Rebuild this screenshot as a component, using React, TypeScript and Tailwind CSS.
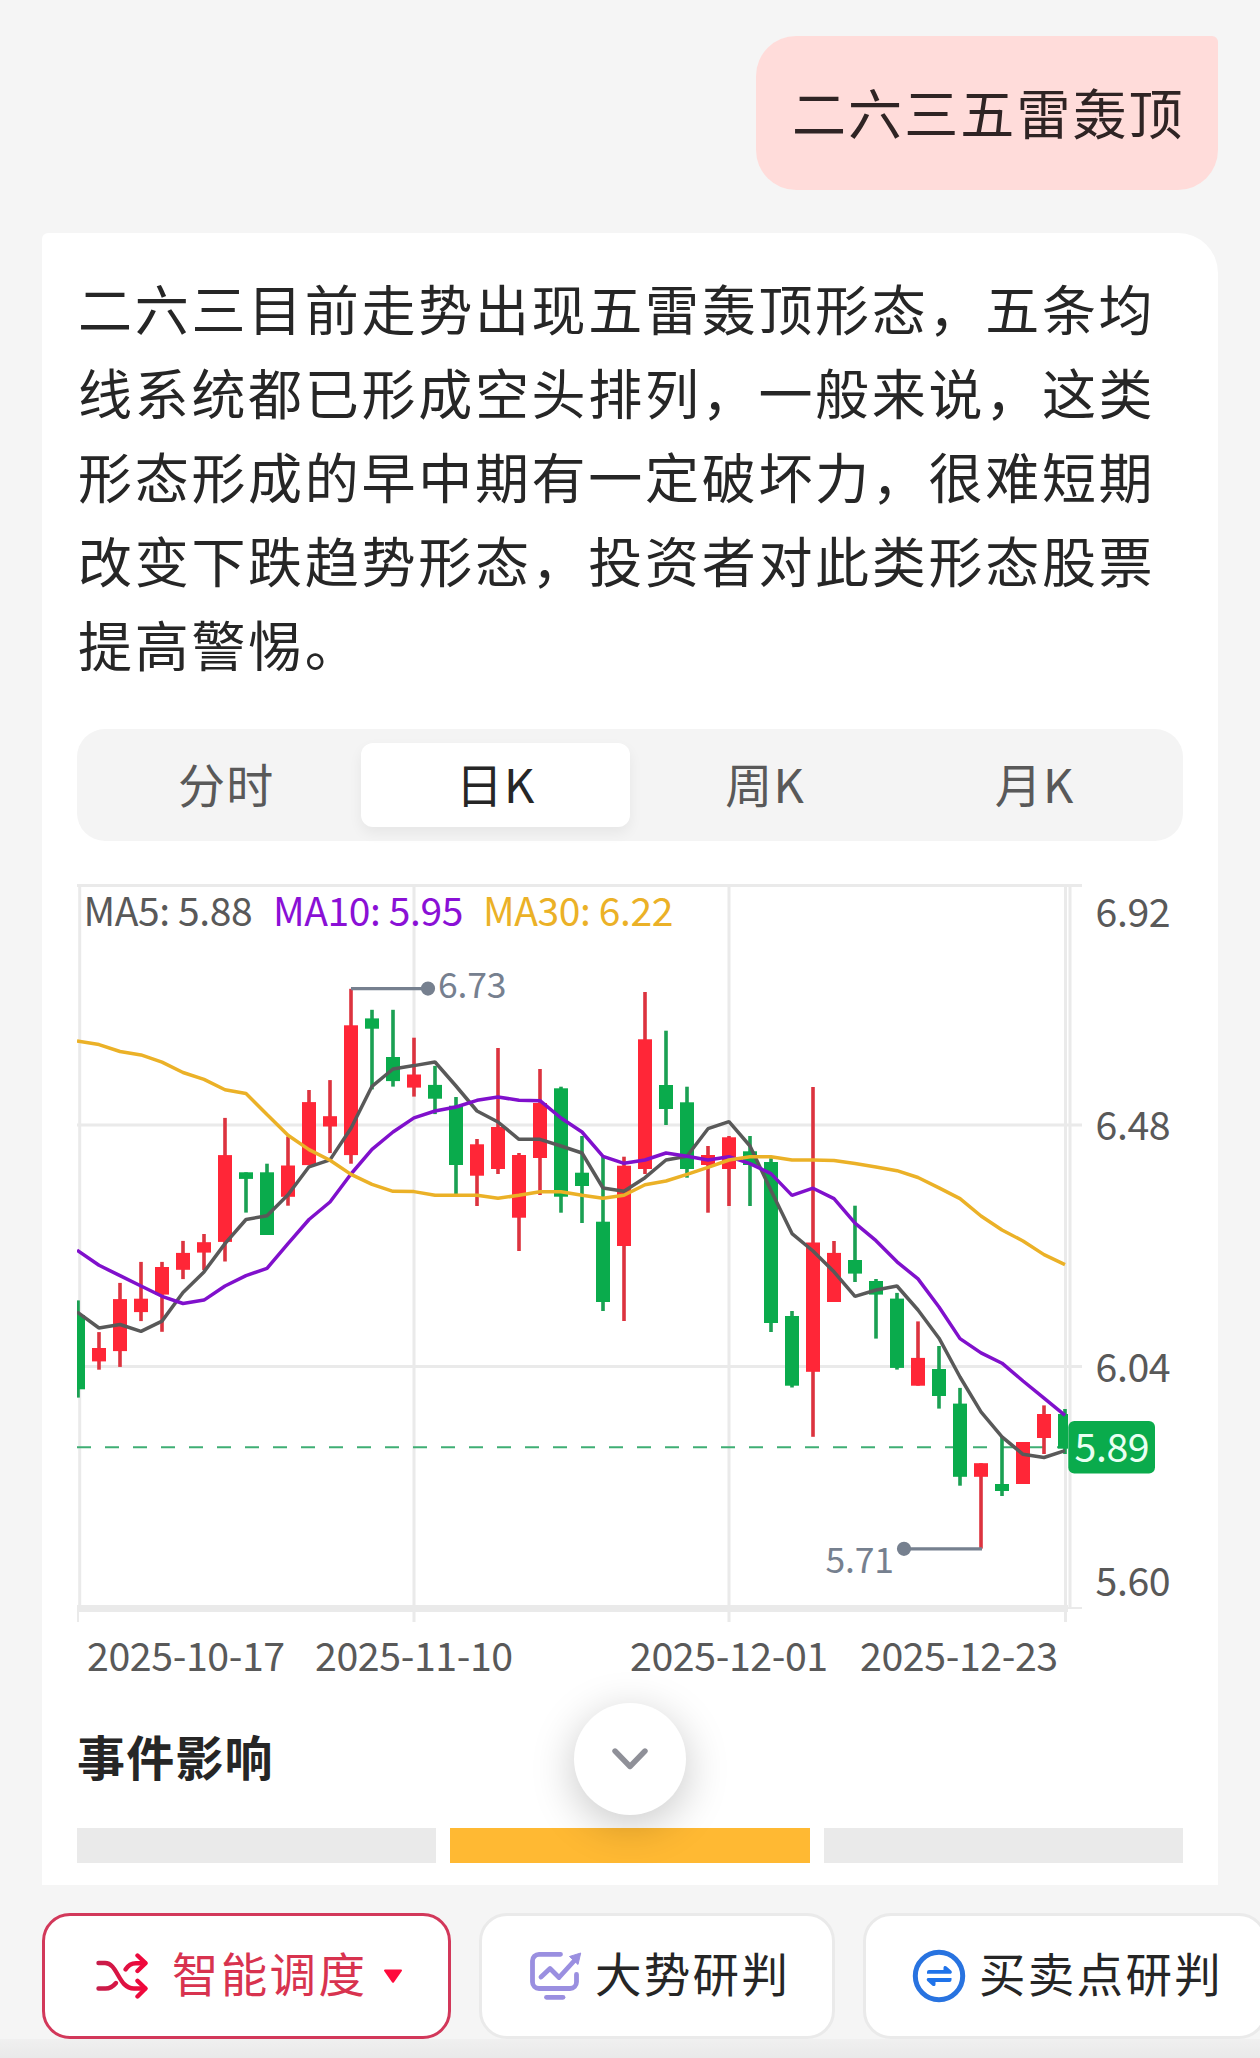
import { ReactNode, useState } from "react";
import clsx from "clsx";

type Candle = {
  high: number;
  top: number;
  bottom: number;
  low: number;
  up: boolean;
};

const UP = "#ff2637";
const DOWN = "#0aab4c";
const STEP = 21;

// [high, body top, body bottom, low, up] in plot units
const RAW: [number, number, number, number, 0 | 1][] = [
  [420.4, 435.3, 509.3, 517.6, 0],
  [452.1, 468, 481.4, 489.7, 1],
  [402.9, 419.1, 471.1, 486.9, 1],
  [381.9, 418.7, 432.1, 441.1, 1],
  [381.9, 387, 414.6, 451.8, 1],
  [360.9, 372.9, 389.8, 399.1, 1],
  [354, 362.2, 372.6, 390.1, 1],
  [237.9, 275.1, 361.9, 381.5, 1],
  [292.3, 292.3, 298.9, 332.6, 0],
  [283.7, 292.3, 355, 355, 0],
  [256.5, 285.5, 316.8, 325.7, 1],
  [210, 222.1, 285.1, 285.1, 1],
  [200.1, 236.2, 246.5, 273.1, 1],
  [108.8, 145.3, 275.1, 283.7, 1],
  [129.8, 138.4, 148.7, 209.4, 0],
  [129.8, 177, 201.1, 206.6, 0],
  [157.7, 194.5, 207.6, 216.6, 1],
  [185.9, 204.9, 218.7, 234.1, 0],
  [217, 225.7, 285, 314.3, 0],
  [259, 264.3, 295.7, 326, 1],
  [168, 247, 289, 294, 1],
  [273, 275, 337.7, 371, 1],
  [189, 223, 278, 315, 1],
  [206.7, 208.3, 316.7, 332.7, 0],
  [256, 292.7, 306, 343, 0],
  [276.7, 341.7, 422, 431, 0],
  [276.7, 285.7, 366, 441, 1],
  [112, 159.3, 289, 294, 1],
  [150.7, 205, 229, 245, 0],
  [206.7, 222.3, 289, 297.7, 0],
  [266, 275, 285, 332.7, 1],
  [256, 257.3, 289, 326, 1],
  [256, 271.3, 285, 326, 0],
  [278.3, 282, 443, 452, 0],
  [431, 436, 505.7, 507.5, 0],
  [207, 362.5, 491.8, 556.8, 1],
  [361, 372.9, 422, 422, 1],
  [325.7, 380, 393.6, 402, 0],
  [399, 401, 414.6, 458.6, 0],
  [412.9, 418.6, 487.9, 489.6, 0],
  [441.4, 477.9, 505.7, 505.7, 1],
  [466, 489, 516, 528.6, 0],
  [507.9, 523.6, 596.8, 605.7, 0],
  [583.2, 583.2, 596.8, 668.6, 1],
  [556.8, 604, 611, 616, 0],
  [562, 562, 604, 604, 1],
  [525.4, 534, 558, 574, 1],
  [529, 534, 568.6, 574, 0],
];

const CANDLES: Candle[] = RAW.map(([high, top, bottom, low, up]) => ({
  high,
  top,
  bottom,
  low,
  up: up === 1,
}));

const MA5 = [
  431.8, 448, 444.5, 451.4, 441.1, 412.5, 391.9, 363.6, 339.5, 335.7, 314.7, 286.8,
  279.9, 248.3, 206.3, 189, 185.6, 182, 206, 231, 242, 259.3, 259.3, 266, 273, 308,
  311.3, 297.7, 280, 276.3, 248.7, 241.7, 266, 310.4, 353.6, 371, 391.8, 416.4, 410,
  406, 430, 458.2, 497, 531.8, 556.8, 574.3, 577.5, 570.7,
];

const MA10 = [
  370.2, 385.3, 395.6, 406, 416.3, 423.5, 420.1, 406, 395.6, 388.4, 363.6, 339.5,
  322, 294, 269.3, 252, 237.9, 231, 227, 220.3, 217, 220.3, 220.7, 238, 252, 276.3,
  283.3, 280, 273, 276.3, 280, 276.7, 283.6, 293.6, 315.4, 308.2, 318.6, 343.2,
  360.7, 381.8, 398.9, 427, 458.6, 472.9, 483.2, 501, 518.2, 535.4,
];

const MA30 = [
  161.1, 164.6, 171.5, 174.9, 182.1, 192.5, 199.4, 209.7, 213.5, 234.5, 255.2, 269.6,
  280.3, 294.4, 304.4, 311.3, 311.6, 315.2, 315.3, 315.3, 318.3, 315.3, 311.7, 311.7,
  315.3, 318.3, 315.3, 304.7, 301, 294.3, 287.3, 280, 276.7, 276.8, 280, 280, 280.4,
  283.6, 287, 290.7, 297.5, 307.9, 318.6, 336, 350, 361, 374.6, 384.6,
];

const TABS = ["分时", "日K", "周K", "月K"];

const cx = (i: number) => 1 + i * STEP;

// the first point is pulled back to the plot's left edge
const toPoints = (values: number[]) =>
  values.map((v, i) => `${i === 0 ? 0 : cx(i)},${v}`).join(" ");

function KLineChart() {
  return (
    <svg
      viewBox="0 0 1106 820"
      className="block h-[820px] w-[1106px] overflow-visible font-['Noto_Sans_CJK_SC',sans-serif]"
    >
      <defs>
        <clipPath id="plot">
          <rect x="0" y="0" width="991" height="740" />
        </clipPath>
      </defs>

      {/* grid */}
      <g stroke="#eaeaea" strokeWidth="3" fill="none">
        <path d="M0 5.5H1005M0 245H1005M0 486.5H1005" />
        <path d="M2.7 5V729M337 5V742M652 5V742M988.5 5V742M993 5V729" />
        <path d="M1 729V742" strokeWidth="2" />
        <path d="M990 728H1005" strokeWidth="2" />
        <path d="M0 728.5H991" strokeWidth="7" />
      </g>

      <path d="M0 567.2H991" stroke="#3fae74" strokeWidth="2" strokeDasharray="14 14" />

      <g clipPath="url(#plot)">
        {CANDLES.map((c, i) => (
          <g key={i} fill={c.up ? UP : DOWN}>
            <rect
              x={cx(i) - 1.8}
              y={c.high}
              width="3.6"
              height={c.low - c.high}
              fill={c.up ? "#dc333f" : "#1ba053"}
            />
            <rect x={cx(i) - 7} y={c.top} width="14" height={c.bottom - c.top} />
          </g>
        ))}
        <g fill="none" strokeWidth="3.5" strokeLinejoin="bevel">
          <polyline points={toPoints(MA5)} stroke="#595959" />
          <polyline points={toPoints(MA10)} stroke="#8010cc" />
          <polyline points={toPoints(MA30)} stroke="#ebb127" />
        </g>
      </g>

      {/* high and low marks */}
      <g fill="#76808f" stroke="#76808f" strokeWidth="3.2">
        <path d="M274 108.6H351M827 668.8H905" />
        <circle cx="351" cy="108.6" r="5.5" />
        <circle cx="827" cy="668.8" r="5.5" />
      </g>
      <g fill="#76808f" fontSize="35.5" letterSpacing="-0.2">
        <text x="361" y="118">6.73</text>
        <text x="748.5" y="692.7">5.71</text>
      </g>

      <g fontSize="39" letterSpacing="-0.4">
        <text x="6.5" y="45.6" fill="#595959">MA5: 5.88</text>
        <text x="196" y="45.6" fill="#8a10d6">MA10: 5.95</text>
        <text x="406" y="45.6" fill="#ebb127">MA30: 6.22</text>
      </g>

      <g fill="#595959" fontSize="39.3" letterSpacing="-0.4">
        <text x="1018.5" y="46.5">6.92</text>
        <text x="1018.5" y="260">6.48</text>
        <text x="1018.5" y="502">6.04</text>
        <text x="1018.5" y="715.5">5.60</text>
        <text x="10" y="790.5">2025-10-17</text>
        <text x="238" y="790.5">2025-11-10</text>
        <text x="553" y="790.5">2025-12-01</text>
        <text x="783" y="790.5">2025-12-23</text>
      </g>

      <rect x="991.3" y="541" width="86.7" height="52.6" rx="6" fill={DOWN} />
      <text x="997.5" y="582" fill="#e9fff2" fontSize="39.3" letterSpacing="-0.4">5.89</text>
    </svg>
  );
}

function ShuffleIcon() {
  return (
    <svg viewBox="0 0 52 46" className="h-[46px] w-[52px]" fill="none">
      <defs>
        <linearGradient id="shuffle" x1="0" x2="52" y1="0" y2="0" gradientUnits="userSpaceOnUse">
          <stop offset="0" stopColor="#c41f4b" />
          <stop offset="1" stopColor="#f4063a" />
        </linearGradient>
      </defs>
      <g stroke="url(#shuffle)" strokeWidth="4.4" strokeLinecap="round" strokeLinejoin="round">
        <path d="M2.5 10H9C22 10 22 35.5 38 35.5H49" />
        <path d="M2.5 35.5H9.5C14.5 35.5 17.5 33 20 30" />
        <path d="M29.5 16.5C32 12.5 35.5 10.2 40 10.2H49" />
        <path d="M41.5 2.5L49.5 10.2L41.5 18M41.5 27.8L49.5 35.5L41.5 43.5" />
      </g>
    </svg>
  );
}

function TrendIcon() {
  return (
    <svg viewBox="0 0 52 50" className="h-[50px] w-[52px]" fill="none">
      <g stroke="#9a8fe0" strokeWidth="4.8" strokeLinecap="round" strokeLinejoin="round">
        <path d="M30.5 3.3H9A6.5 6.5 0 0 0 2.5 9.8V31A6.5 6.5 0 0 0 9 37.5H40A6.5 6.5 0 0 0 46.5 31V23.5" />
        <path d="M11 26L20 17.5L29 26.5L44.5 9.5" />
        <path d="M16.5 46.3H33" />
      </g>
      <path d="M50.7 2L39.5 5.5L48 13.5Z" fill="#9a8fe0" stroke="#9a8fe0" strokeLinejoin="round" />
    </svg>
  );
}

function SwapIcon() {
  return (
    <svg viewBox="0 0 54 54" className="h-[54px] w-[54px]" fill="none">
      <circle cx="27" cy="27" r="23.7" stroke="#2873e0" strokeWidth="5" />
      <path
        d="M15 24.8V23A2 2 0 0 1 17 21H31.5V18.8C31.5 17 33.5 16.6 34.8 17.8L39 21.6C40.6 23.2 39.8 24.8 38 24.8Z"
        fill="#1f73ea"
      />
      <path
        d="M39.5 29V31A2 2 0 0 1 37.5 33H23.5V35.5C23.5 37.2 21.5 37.6 20.2 36.4L15.6 32.3C14 30.7 14.8 29 16.6 29Z"
        fill="#1f73ea"
      />
    </svg>
  );
}

type ChipProps = {
  icon: ReactNode;
  label: string;
  className: string;
  children?: ReactNode;
};

function Chip({ icon, label, className, children }: ChipProps) {
  return (
    <button
      className={clsx(
        "flex h-[126px] shrink-0 items-center rounded-[28px] border-[3px] bg-white",
        className
      )}
    >
      {icon}
      <span className="pb-2 text-[46.5px] leading-none tracking-[2.3px] whitespace-nowrap">{label}</span>
      {children}
    </button>
  );
}

export default function App() {
  const [tab, setTab] = useState("日K");

  return (
    <div className="flex h-[2058px] w-[1260px] flex-col overflow-hidden bg-[#f5f5f5] font-['Noto_Sans_CJK_SC',sans-serif] text-[#262626]">
      <div className="mt-9 mr-[42px] flex h-[154px] w-[462px] items-center self-end rounded-[40px] rounded-tr-[6px] bg-[#ffdcda] pb-0.5 pl-9">
        <p className="text-[54px] leading-none tracking-[2.1px] whitespace-nowrap text-[#2f2424]">二六三五雷轰顶</p>
      </div>

      <main className="relative mx-[42px] mt-[43px] h-[1652px] shrink-0 rounded-tl-[6px] rounded-tr-[40px] bg-white px-[35px] pt-[33px]">
        <p className="pl-px text-[54px] leading-[84px] tracking-[2.7px]">
          二六三目前走势出现五雷轰顶形态，五条均线系统都已形成空头排列，一般来说，这类形态形成的早中期有一定破坏力，很难短期改变下跌趋势形态，投资者对此类形态股票提高警惕。
        </p>

        <div className="mt-[43px] grid h-[112px] grid-cols-4 rounded-[28px] bg-[#f4f4f4] p-[14px]">
          {TABS.map((item) => (
            <button
              key={item}
              onClick={() => setTab(item)}
              className={clsx(
                "flex items-center justify-center rounded-xl pb-1.5 pl-px text-[47px] leading-none tracking-[1.2px]",
                item === tab
                  ? "bg-white text-[#262626] shadow-[0_6px_14px_rgba(0,0,0,0.06)]"
                  : "text-[#595959]"
              )}
            >
              {item}
            </button>
          ))}
        </div>

        <div className="mt-[39px]">
          <KLineChart />
        </div>

        <h2 className="mt-[31px] text-[48px] leading-[48px] font-bold tracking-[1.2px]">事件影响</h2>
        <div className="mt-[49px] grid h-[35px] grid-cols-3 gap-[14px]">
          <div className="bg-[#eaeaea]" />
          <div className="bg-[#ffb933]" />
          <div className="bg-[#eaeaea]" />
        </div>

        <button
          aria-label="展开"
          className="absolute bottom-[70px] left-[532px] flex size-28 items-center justify-center rounded-full bg-white shadow-[0_10px_44px_rgba(0,0,0,0.22)]"
        >
          <svg viewBox="0 0 36 22" className="h-[22px] w-9" fill="none">
            <path
              d="M3 3L18 18.5L33 3"
              stroke="#8f9098"
              strokeWidth="5.4"
              strokeLinecap="round"
              strokeLinejoin="round"
            />
          </svg>
        </button>
      </main>

      <div className="mt-7 flex shrink-0 gap-7 pl-[42px]">
        <Chip
          className="w-[409px] gap-6 border-[#d2385a] pl-[51px] text-[#d8334f]"
          icon={<ShuffleIcon />}
          label="智能调度"
        >
          <svg viewBox="0 0 20 15" className="-ml-2 h-[15px] w-5">
            <path d="M2 1.5H18L10 12.8Z" fill="#ff0a3c" stroke="#ff0a3c" strokeWidth="2" strokeLinejoin="round" />
          </svg>
        </Chip>
        <Chip className="w-[356px] gap-[13px] border-[#eaeaea] pl-12" icon={<TrendIcon />} label="大势研判" />
        <Chip className="w-[404px] gap-[13px] border-[#eaeaea] pl-[46px]" icon={<SwapIcon />} label="买卖点研判" />
      </div>
      <div className="h-[19px] shrink-0 bg-gradient-to-b from-[#f0f0f0] to-[#e9e9e9]" />
    </div>
  );
}
